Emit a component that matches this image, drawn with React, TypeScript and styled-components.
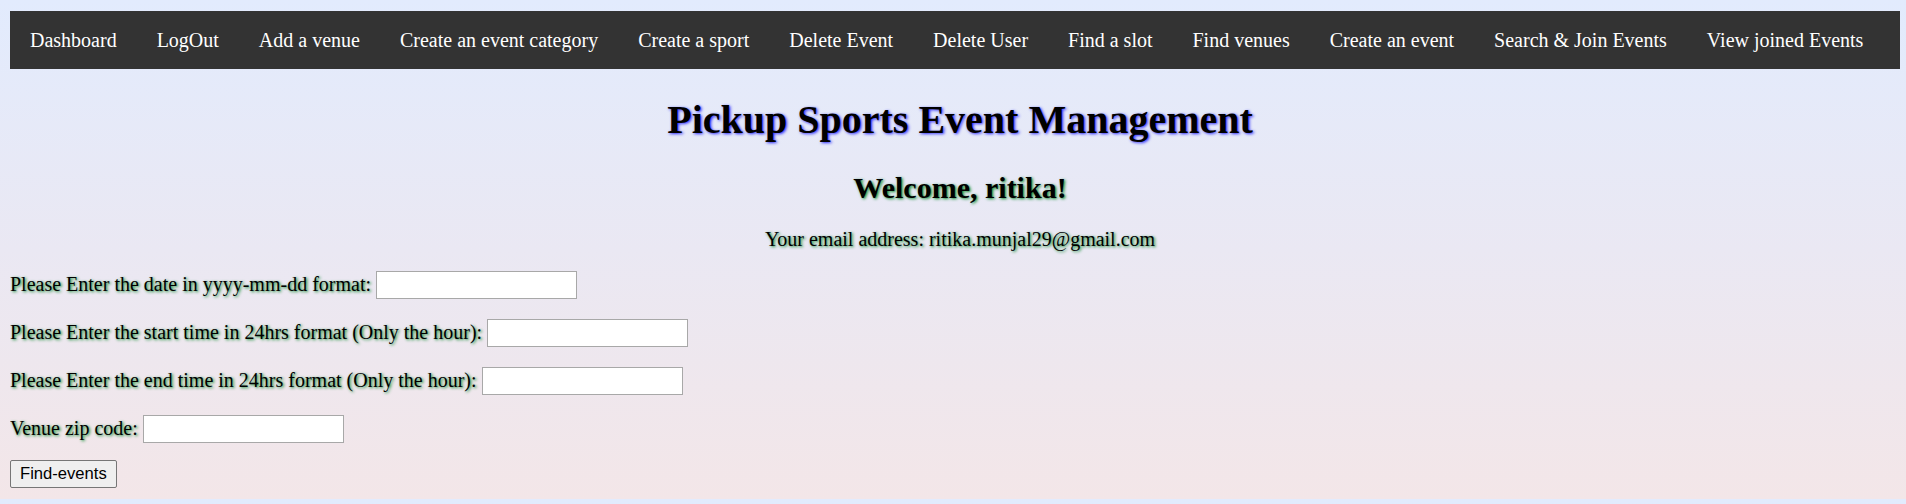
import React from "react";
import styled, { createGlobalStyle } from "styled-components";

const GlobalStyle = createGlobalStyle`
  html {
    background: linear-gradient(to bottom, #e2ebfd 0%, #eae8f3 50%, #f3e6e8 100%);
    background-size: 100% 499px;
    background-repeat: repeat-y;
  }
  body {
    margin: 11px 6px 10px 10px;
    font-family: "Liberation Serif", "Times New Roman", serif;
    font-size: 20px;
    color: #000;
  }
`;

const NavBar = styled.ul`
  list-style: none;
  margin: 0;
  padding: 0;
  display: flex;
  background: #333333;
  overflow: hidden;
`;

const NavItem = styled.li`
  display: block;
`;

const NavLink = styled.a`
  display: block;
  color: #ffffff;
  text-decoration: none;
  font-size: 20px;
  line-height: 23px;
  padding: 17.5px 20px;
  white-space: nowrap;
`;

const Header = styled.header`
  padding-left: 10px;
  text-align: center;
`;

const Title = styled.h1`
  font-size: 40px;
  font-weight: bold;
  line-height: 46px;
  margin: 27.5px 0 28px;
  text-shadow: 1.25px 1.25px 3px #2a2aff;
`;

const Welcome = styled.h2`
  font-size: 30px;
  font-weight: bold;
  line-height: 34.5px;
  margin: 24.9px 0 0;
  text-shadow: 1.25px 1.25px 3px #0b8a2c;
`;

const Email = styled.p`
  margin: 22.6px 0 20px;
  line-height: 23px;
  text-shadow: 1.25px 1.25px 3px #0b8a2c;
`;

const Form = styled.form`
  display: flex;
  flex-direction: column;
  gap: 20px;
  margin-top: 20px;
  align-items: flex-start;
`;

const Row = styled.div`
  display: flex;
  align-items: center;
  gap: 5px;
  height: 28px;
`;

const Label = styled.label`
  line-height: 23px;
  text-shadow: 1.25px 1.25px 3px #0b8a2c;
  white-space: nowrap;
`;

const TextInput = styled.input`
  box-sizing: border-box;
  width: 201px;
  height: 28px;
  border: 1px solid #a8a8a8;
  background: #ffffff;
  padding: 1px 3px;
  font-family: "Liberation Sans", Arial, sans-serif;
  font-size: 16.6px;
`;

const Button = styled.button`
  box-sizing: border-box;
  height: 28px;
  margin-top: -3px;
  padding: 0 9px;
  font-family: "Liberation Sans", Arial, sans-serif;
  font-size: 16.6px;
  color: #000;
  background: #efefef;
  border: 1px solid #767676;
  border-radius: 2px;
`;

const navItems = [
  "Dashboard",
  "LogOut",
  "Add a venue",
  "Create an event category",
  "Create a sport",
  "Delete Event",
  "Delete User",
  "Find a slot",
  "Find venues",
  "Create an event",
  "Search & Join Events",
  "View joined Events",
];

const fields = [
  { id: "date", label: "Please Enter the date in yyyy-mm-dd format:" },
  { id: "start", label: "Please Enter the start time in 24hrs format (Only the hour):" },
  { id: "end", label: "Please Enter the end time in 24hrs format (Only the hour):" },
  { id: "zip", label: "Venue zip code:" },
];

export default function App() {
  return (
    <>
      <GlobalStyle />
      <NavBar>
        {navItems.map((item) => (
          <NavItem key={item}>
            <NavLink href="#">{item}</NavLink>
          </NavItem>
        ))}
      </NavBar>
      <Header>
        <Title>Pickup Sports Event Management</Title>
        <Welcome>Welcome, ritika!</Welcome>
        <Email>Your email address: ritika.munjal29@gmail.com</Email>
      </Header>
      <Form onSubmit={(e) => e.preventDefault()}>
        {fields.map((f) => (
          <Row key={f.id}>
            <Label htmlFor={f.id}>{f.label}</Label>
            <TextInput id={f.id} type="text" />
          </Row>
        ))}
        <Button type="submit">Find-events</Button>
      </Form>
    </>
  );
}
